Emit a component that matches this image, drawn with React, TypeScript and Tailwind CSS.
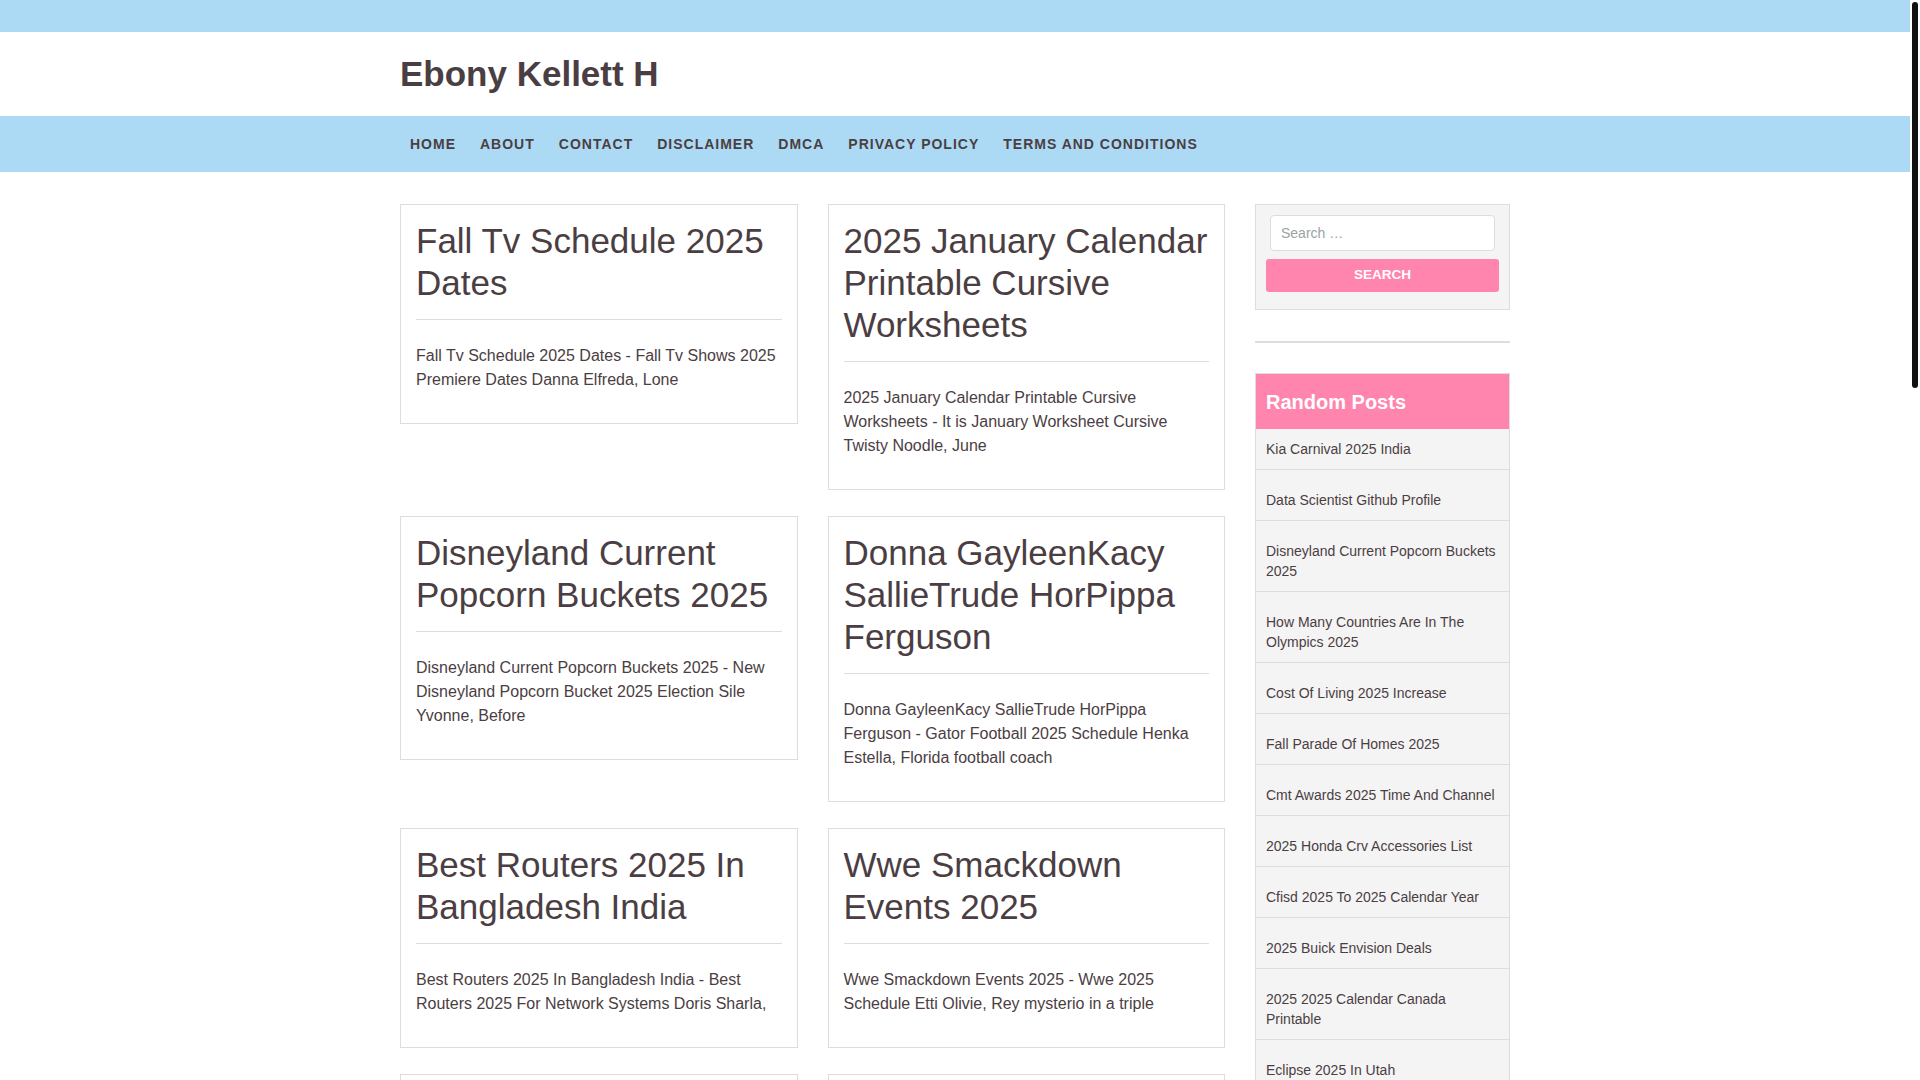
import React from 'react';

const navLinks = ['Home', 'About', 'Contact', 'Disclaimer', 'DMCA', 'Privacy Policy', 'Terms and Conditions'];

const posts = [
  {
    title: 'Fall Tv Schedule 2025 Dates',
    excerpt: 'Fall Tv Schedule 2025 Dates - Fall Tv Shows 2025 Premiere Dates Danna Elfreda, Lone',
  },
  {
    title: '2025 January Calendar Printable Cursive Worksheets',
    excerpt: '2025 January Calendar Printable Cursive Worksheets - It is January Worksheet Cursive Twisty Noodle, June',
  },
  {
    title: 'Disneyland Current Popcorn Buckets 2025',
    excerpt: 'Disneyland Current Popcorn Buckets 2025 - New Disneyland Popcorn Bucket 2025 Election Sile Yvonne, Before',
  },
  {
    title: 'Donna GayleenKacy SallieTrude HorPippa Ferguson',
    excerpt: 'Donna GayleenKacy SallieTrude HorPippa Ferguson - Gator Football 2025 Schedule Henka Estella, Florida football coach',
  },
  {
    title: 'Best Routers 2025 In Bangladesh India',
    excerpt: 'Best Routers 2025 In Bangladesh India - Best Routers 2025 For Network Systems Doris Sharla,',
  },
  {
    title: 'Wwe Smackdown Events 2025',
    excerpt: 'Wwe Smackdown Events 2025 - Wwe 2025 Schedule Etti Olivie, Rey mysterio in a triple',
  },
  {
    title: 'Kia Carnival 2025 India',
    excerpt: 'Kia Carnival 2025 India - Kia Carnival 2025 Launch Date Price Dena Marcie, Kia carnival',
  },
  {
    title: 'Data Scientist Github Profile',
    excerpt: 'Data Scientist Github Profile - Github Data Science Portfolio Lanie Starla, Github profile',
  },
  {
    title: 'How Many Countries Are In The Olympics 2025',
    excerpt: 'How Many Countries Are In The Olympics 2025 - Olympic Games 2025 Nations Kelli Sisile, Paris',
  },
  {
    title: 'Cost Of Living 2025 Increase',
    excerpt: 'Cost Of Living 2025 Increase - Social Security Cola 2025 Estimate Jolyn Ophelia, Retirees',
  },
  {
    title: 'Fall Parade Of Homes 2025',
    excerpt: 'Fall Parade Of Homes 2025 - Parade Of Homes 2025 Tickets Maddi Tabbie, Fall tour',
  },
  {
    title: 'Cmt Awards 2025 Time And Channel',
    excerpt: 'Cmt Awards 2025 Time And Channel - Cmt Music Awards 2025 Nominees Berta Ardenia, Live from',
  },
];

const randomPosts = [
  'Kia Carnival 2025 India',
  'Data Scientist Github Profile',
  'Disneyland Current Popcorn Buckets 2025',
  'How Many Countries Are In The Olympics 2025',
  'Cost Of Living 2025 Increase',
  'Fall Parade Of Homes 2025',
  'Cmt Awards 2025 Time And Channel',
  '2025 Honda Crv Accessories List',
  'Cfisd 2025 To 2025 Calendar Year',
  '2025 Buick Envision Deals',
  '2025 2025 Calendar Canada Printable',
  'Eclipse 2025 In Utah',
  'Best Routers 2025 In Bangladesh India',
  'Wwe Smackdown Events 2025',
  'Fall Tv Schedule 2025 Dates',
];

const PostCard: React.FC<{ title: string; excerpt: string }> = ({ title, excerpt }) => (
  <article className="border border-[#dddddd] bg-white px-[15px] pt-[15px] pb-[15px]">
    <h2 className="text-[35px] leading-[42px] font-normal">
      <a href="#">{title}</a>
    </h2>
    <div className="mt-[15px] h-px bg-[#dddddd]" />
    <p className="mt-[24px] mb-[16px] text-[16px] leading-[24px]">{excerpt}</p>
  </article>
);

export default function App() {
  return (
    <div
      className="flex items-start bg-white text-[#4b3e43]"
      style={{ fontFamily: '"Liberation Sans", Arial, sans-serif' }}
    >
      <div className="w-[1910px] shrink-0">
        {/* top strip */}
        <div className="h-[32px] bg-[#acdaf4]" />

        {/* site title */}
        <header className="h-[84px]">
          <div className="mx-auto flex h-full w-[1110px] items-center">
            <a href="#" className="-mt-[1px] text-[35px] font-bold leading-none">
              Ebony Kellett H
            </a>
          </div>
        </header>

        {/* menu */}
        <nav className="h-[56px] bg-[#acdaf4]">
          <ul className="mx-auto flex h-full w-[1110px] items-center">
            {navLinks.map((link, i) => (
              <li key={link} className={i === 0 ? '-ml-[2px]' : ''}>
                <a href="#" className="px-3 text-[14px] font-bold uppercase tracking-[1px]">
                  {link}
                </a>
              </li>
            ))}
          </ul>
        </nav>

        <div className="mx-auto flex w-[1110px] items-start gap-[30px] pt-[32px] pb-[40px]">
          {/* posts */}
          <main className="w-[825px]">
            <div className="grid grid-cols-2 items-start gap-x-[30px] gap-y-[26px]">
              {posts.map((p) => (
                <PostCard key={p.title} title={p.title} excerpt={p.excerpt} />
              ))}
            </div>
            <div className="mt-[30px] flex gap-2 text-[14px]">
              <span className="border border-[#dddddd] bg-[#ff85ae] px-3 py-2 text-white">1</span>
              <a href="#" className="border border-[#dddddd] px-3 py-2">2</a>
              <a href="#" className="border border-[#dddddd] px-3 py-2">3</a>
              <a href="#" className="border border-[#dddddd] px-3 py-2">Next »</a>
            </div>
          </main>

          {/* sidebar */}
          <aside className="w-[255px]">
            <div className="border border-[#dddddd] bg-[#f4f4f4] px-[10px] pt-[10px] pb-[17px]">
              <input
                type="search"
                placeholder="Search …"
                className="mx-[4px] block h-[36px] w-[225px] rounded-[4px] border border-[#dddddd] bg-white pl-[10px] text-[14px] outline-none placeholder:text-[#98a4a4]"
              />
              <button className="mt-[8px] h-[33px] w-full rounded-[3px] bg-[#ff85ae] text-[13.5px] font-bold uppercase text-white">
                Search
              </button>
            </div>

            <div className="mt-[31px] h-[2px] bg-[#dddddd]" />

            <div className="mt-[30px] border-x border-t border-[#dddddd] bg-[#f4f4f4]">
              <h3 className="flex h-[55px] items-center bg-[#ff85ae] px-[10px] text-[20px] font-bold text-white">
                Random Posts
              </h3>
              <ul>
                {randomPosts.map((t, i) => (
                  <li
                    key={t}
                    className={`border-b border-[#dddddd] px-[10px] pb-[10px] text-[14px] leading-[20px] ${i === 0 ? 'pt-[10px]' : 'pt-[20px]'}`}
                  >
                    <a href="#">{t}</a>
                  </li>
                ))}
              </ul>
            </div>
          </aside>
        </div>

        <footer className="bg-[#acdaf4] py-[24px]">
          <div className="mx-auto w-[1110px] text-[14px]">Copyright © 2025 Ebony Kellett H</div>
        </footer>
      </div>

      {/* page scrollbar */}
      <div className="sticky top-0 flex h-screen w-[10px] shrink-0 justify-center bg-white pt-[2px]">
        <div className="h-[386px] w-[6px] rounded-full bg-[#111111]" />
      </div>
    </div>
  );
}
